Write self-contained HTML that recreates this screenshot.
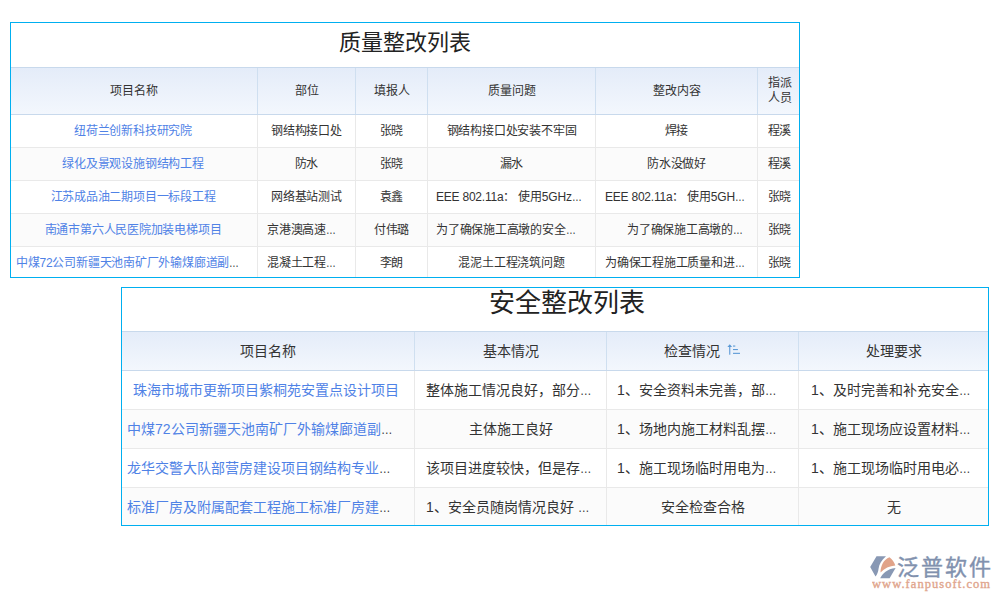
<!DOCTYPE html>
<html lang="zh-CN"><head><meta charset="utf-8"><style>
html,body{margin:0;padding:0;background:#fff;width:1000px;height:600px;overflow:hidden;position:relative}
body{font-family:"Liberation Sans",sans-serif}
.t{position:absolute;white-space:nowrap;overflow:hidden}
.e{display:inline-block;color:#333;transform:scaleX(.82);transform-origin:0 0}
.sort{display:inline-block;width:16px;height:12px;margin-left:5px}
</style></head><body>
<div style="position:absolute;left:10px;top:22px;width:790px;height:256px;box-sizing:border-box;border:1px solid #00aff0;background:#fff"></div><div style="position:absolute;left:11px;top:67px;width:788px;height:48px;background:linear-gradient(#e4ecf9,#f3f7fd);border-top:1px solid #c8d9ec;border-bottom:1px solid #c8d9ec;box-sizing:border-box"></div><div style="position:absolute;left:11px;top:148px;width:788px;height:32px;background:#fbfbfb"></div><div style="position:absolute;left:11px;top:214px;width:788px;height:32px;background:#fbfbfb"></div><div style="position:absolute;left:11px;top:147px;width:788px;height:1px;background:#e9e9e9"></div><div style="position:absolute;left:11px;top:180px;width:788px;height:1px;background:#e9e9e9"></div><div style="position:absolute;left:11px;top:213px;width:788px;height:1px;background:#e9e9e9"></div><div style="position:absolute;left:11px;top:246px;width:788px;height:1px;background:#e9e9e9"></div><div style="position:absolute;left:257px;top:68px;width:1px;height:46px;background:#cfdff0"></div><div style="position:absolute;left:257px;top:115px;width:1px;height:162px;background:#e9e9e9"></div><div style="position:absolute;left:355px;top:68px;width:1px;height:46px;background:#cfdff0"></div><div style="position:absolute;left:355px;top:115px;width:1px;height:162px;background:#e9e9e9"></div><div style="position:absolute;left:427px;top:68px;width:1px;height:46px;background:#cfdff0"></div><div style="position:absolute;left:427px;top:115px;width:1px;height:162px;background:#e9e9e9"></div><div style="position:absolute;left:595px;top:68px;width:1px;height:46px;background:#cfdff0"></div><div style="position:absolute;left:595px;top:115px;width:1px;height:162px;background:#e9e9e9"></div><div style="position:absolute;left:757px;top:68px;width:1px;height:46px;background:#cfdff0"></div><div style="position:absolute;left:757px;top:115px;width:1px;height:162px;background:#e9e9e9"></div><div class="t" style="left:11px;top:21px;width:788px;height:44px;line-height:44px;text-align:center;font-size:22px;color:#222">质量整改列表</div><div class="t" style="left:11px;top:68px;width:246px;height:46px;line-height:46px;text-align:center;font-size:12px;color:#333333">项目名称</div><div class="t" style="left:258px;top:68px;width:97px;height:46px;line-height:46px;text-align:center;font-size:12px;color:#333333">部位</div><div class="t" style="left:356px;top:68px;width:71px;height:46px;line-height:46px;text-align:center;font-size:12px;color:#333333">填报人</div><div class="t" style="left:428px;top:68px;width:167px;height:46px;line-height:46px;text-align:center;font-size:12px;color:#333333">质量问题</div><div class="t" style="left:596px;top:68px;width:161px;height:46px;line-height:46px;text-align:center;font-size:12px;color:#333333">整改内容</div><div class="t" style="left:758px;top:68px;width:41px;height:46px;line-height:46px;text-align:center;font-size:12px;color:#333333"><span style="display:inline-block;line-height:14.5px;vertical-align:middle;position:relative;left:1px;top:-1px">指派<br>人员</span></div><div class="t" style="left:10px;top:115px;width:246px;height:32px;line-height:32px;text-align:center;font-size:12px;color:#4f82e6;letter-spacing:-0.22px">纽荷兰创新科技研究院</div><div class="t" style="left:258px;top:115px;width:97px;height:32px;line-height:32px;text-align:center;font-size:12px;color:#333333;letter-spacing:-0.22px">钢结构接口处</div><div class="t" style="left:356px;top:115px;width:71px;height:32px;line-height:32px;text-align:center;font-size:12px;color:#333333;letter-spacing:-0.22px">张晓</div><div class="t" style="left:428px;top:115px;width:167px;height:32px;line-height:32px;text-align:center;font-size:12px;color:#333333;letter-spacing:-0.22px">钢结构接口处安装不牢固</div><div class="t" style="left:596px;top:115px;width:161px;height:32px;line-height:32px;text-align:center;font-size:12px;color:#333333;letter-spacing:-0.22px">焊接</div><div class="t" style="left:759px;top:115px;width:41px;height:32px;line-height:32px;text-align:center;font-size:12px;color:#333333;letter-spacing:-0.22px">程溪</div><div class="t" style="left:10px;top:148px;width:246px;height:32px;line-height:32px;text-align:center;font-size:12px;color:#4f82e6;letter-spacing:-0.22px">绿化及景观设施钢结构工程</div><div class="t" style="left:258px;top:148px;width:97px;height:32px;line-height:32px;text-align:center;font-size:12px;color:#333333;letter-spacing:-0.22px">防水</div><div class="t" style="left:356px;top:148px;width:71px;height:32px;line-height:32px;text-align:center;font-size:12px;color:#333333;letter-spacing:-0.22px">张晓</div><div class="t" style="left:428px;top:148px;width:167px;height:32px;line-height:32px;text-align:center;font-size:12px;color:#333333;letter-spacing:-0.22px">漏水</div><div class="t" style="left:596px;top:148px;width:161px;height:32px;line-height:32px;text-align:center;font-size:12px;color:#333333;letter-spacing:-0.22px">防水没做好</div><div class="t" style="left:759px;top:148px;width:41px;height:32px;line-height:32px;text-align:center;font-size:12px;color:#333333;letter-spacing:-0.22px">程溪</div><div class="t" style="left:10px;top:181px;width:246px;height:32px;line-height:32px;text-align:center;font-size:12px;color:#4f82e6;letter-spacing:-0.22px">江苏成品油二期项目一标段工程</div><div class="t" style="left:258px;top:181px;width:97px;height:32px;line-height:32px;text-align:center;font-size:12px;color:#333333;letter-spacing:-0.22px">网络基站测试</div><div class="t" style="left:356px;top:181px;width:71px;height:32px;line-height:32px;text-align:center;font-size:12px;color:#333333;letter-spacing:-0.22px">袁鑫</div><div class="t" style="left:436px;top:181px;width:159px;height:32px;line-height:32px;text-align:left;font-size:12px;color:#333333;letter-spacing:-0.22px">EEE 802.11a： 使用5GHz<span class="e">…</span></div><div class="t" style="left:605px;top:181px;width:152px;height:32px;line-height:32px;text-align:left;font-size:12px;color:#333333;letter-spacing:-0.22px">EEE 802.11a： 使用5GH<span class="e">…</span></div><div class="t" style="left:759px;top:181px;width:41px;height:32px;line-height:32px;text-align:center;font-size:12px;color:#333333;letter-spacing:-0.22px">张晓</div><div class="t" style="left:10px;top:214px;width:246px;height:32px;line-height:32px;text-align:center;font-size:12px;color:#4f82e6;letter-spacing:-0.22px">南通市第六人民医院加装电梯项目</div><div class="t" style="left:267px;top:214px;width:88px;height:32px;line-height:32px;text-align:left;font-size:12px;color:#333333;letter-spacing:-0.22px">京港澳高速<span class="e">…</span></div><div class="t" style="left:356px;top:214px;width:71px;height:32px;line-height:32px;text-align:center;font-size:12px;color:#333333;letter-spacing:-0.22px">付伟璐</div><div class="t" style="left:436px;top:214px;width:159px;height:32px;line-height:32px;text-align:left;font-size:12px;color:#333333;letter-spacing:-0.22px">为了确保施工高墩的安全<span class="e">…</span></div><div class="t" style="left:627px;top:214px;width:130px;height:32px;line-height:32px;text-align:left;font-size:12px;color:#333333;letter-spacing:-0.22px">为了确保施工高墩的<span class="e">…</span></div><div class="t" style="left:759px;top:214px;width:41px;height:32px;line-height:32px;text-align:center;font-size:12px;color:#333333;letter-spacing:-0.22px">张晓</div><div class="t" style="left:16px;top:247px;width:241px;height:32px;line-height:32px;text-align:left;font-size:12px;color:#4f82e6;letter-spacing:-0.22px">中煤72公司新疆天池南矿厂外输煤廊道副<span class="e">…</span></div><div class="t" style="left:267px;top:247px;width:88px;height:32px;line-height:32px;text-align:left;font-size:12px;color:#333333;letter-spacing:-0.22px">混凝土工程<span class="e">…</span></div><div class="t" style="left:356px;top:247px;width:71px;height:32px;line-height:32px;text-align:center;font-size:12px;color:#333333;letter-spacing:-0.22px">李朗</div><div class="t" style="left:428px;top:247px;width:167px;height:32px;line-height:32px;text-align:center;font-size:12px;color:#333333;letter-spacing:-0.22px">混泥土工程浇筑问题</div><div class="t" style="left:605px;top:247px;width:152px;height:32px;line-height:32px;text-align:left;font-size:12px;color:#333333;letter-spacing:-0.22px">为确保工程施工质量和进<span class="e">…</span></div><div class="t" style="left:759px;top:247px;width:41px;height:32px;line-height:32px;text-align:center;font-size:12px;color:#333333;letter-spacing:-0.22px">张晓</div><div style="position:absolute;left:121px;top:287px;width:868px;height:239px;box-sizing:border-box;border:1px solid #00aff0;background:#fff"></div><div style="position:absolute;left:122px;top:331px;width:866px;height:40px;background:linear-gradient(#e4ecf9,#f3f7fd);border-top:1px solid #c8d9ec;border-bottom:1px solid #c8d9ec;box-sizing:border-box"></div><div style="position:absolute;left:122px;top:410px;width:866px;height:38px;background:#fbfbfb"></div><div style="position:absolute;left:122px;top:488px;width:866px;height:37px;background:#fbfbfb"></div><div style="position:absolute;left:122px;top:409px;width:866px;height:1px;background:#e9e9e9"></div><div style="position:absolute;left:122px;top:448px;width:866px;height:1px;background:#e9e9e9"></div><div style="position:absolute;left:122px;top:487px;width:866px;height:1px;background:#e9e9e9"></div><div style="position:absolute;left:414px;top:332px;width:1px;height:38px;background:#cfdff0"></div><div style="position:absolute;left:414px;top:371px;width:1px;height:154px;background:#e9e9e9"></div><div style="position:absolute;left:606px;top:332px;width:1px;height:38px;background:#cfdff0"></div><div style="position:absolute;left:606px;top:371px;width:1px;height:154px;background:#e9e9e9"></div><div style="position:absolute;left:798px;top:332px;width:1px;height:38px;background:#cfdff0"></div><div style="position:absolute;left:798px;top:371px;width:1px;height:154px;background:#e9e9e9"></div><div class="t" style="left:134px;top:282px;width:866px;height:43px;line-height:43px;text-align:center;font-size:26px;color:#222">安全整改列表</div><div class="t" style="left:122px;top:332px;width:292px;height:38px;line-height:38px;text-align:center;font-size:14px;color:#333333">项目名称</div><div class="t" style="left:415px;top:332px;width:191px;height:38px;line-height:38px;text-align:center;font-size:14px;color:#333333">基本情况</div><div class="t" style="left:607px;top:332px;width:191px;height:38px;line-height:38px;text-align:center;font-size:14px;color:#333333">检查情况<span class="sort"></span></div><div class="t" style="left:799px;top:332px;width:189px;height:38px;line-height:38px;text-align:center;font-size:14px;color:#333333">处理要求</div><div class="t" style="left:133px;top:371px;width:281px;height:38px;line-height:38px;text-align:left;font-size:14px;color:#4f82e6;letter-spacing:0px">珠海市城市更新项目紫桐苑安置点设计项目</div><div class="t" style="left:426px;top:371px;width:180px;height:38px;line-height:38px;text-align:left;font-size:14px;color:#333333;letter-spacing:0px">整体施工情况良好，部分<span class="e">…</span></div><div class="t" style="left:617px;top:371px;width:181px;height:38px;line-height:38px;text-align:left;font-size:14px;color:#333333;letter-spacing:0px">1、安全资料未完善，部<span class="e">…</span></div><div class="t" style="left:811px;top:371px;width:177px;height:38px;line-height:38px;text-align:left;font-size:14px;color:#333333;letter-spacing:0px">1、及时完善和补充安全<span class="e">…</span></div><div class="t" style="left:127px;top:410px;width:287px;height:38px;line-height:38px;text-align:left;font-size:14px;color:#4f82e6;letter-spacing:0px">中煤72公司新疆天池南矿厂外输煤廊道副<span class="e">…</span></div><div class="t" style="left:415px;top:410px;width:191px;height:38px;line-height:38px;text-align:center;font-size:14px;color:#333333;letter-spacing:0px">主体施工良好</div><div class="t" style="left:617px;top:410px;width:181px;height:38px;line-height:38px;text-align:left;font-size:14px;color:#333333;letter-spacing:0px">1、场地内施工材料乱摆<span class="e">…</span></div><div class="t" style="left:811px;top:410px;width:177px;height:38px;line-height:38px;text-align:left;font-size:14px;color:#333333;letter-spacing:0px">1、施工现场应设置材料<span class="e">…</span></div><div class="t" style="left:127px;top:449px;width:287px;height:38px;line-height:38px;text-align:left;font-size:14px;color:#4f82e6;letter-spacing:0px">龙华交警大队部营房建设项目钢结构专业<span class="e">…</span></div><div class="t" style="left:426px;top:449px;width:180px;height:38px;line-height:38px;text-align:left;font-size:14px;color:#333333;letter-spacing:0px">该项目进度较快，但是存<span class="e">…</span></div><div class="t" style="left:617px;top:449px;width:181px;height:38px;line-height:38px;text-align:left;font-size:14px;color:#333333;letter-spacing:0px">1、施工现场临时用电为<span class="e">…</span></div><div class="t" style="left:811px;top:449px;width:177px;height:38px;line-height:38px;text-align:left;font-size:14px;color:#333333;letter-spacing:0px">1、施工现场临时用电必<span class="e">…</span></div><div class="t" style="left:127px;top:488px;width:287px;height:38px;line-height:38px;text-align:left;font-size:14px;color:#4f82e6;letter-spacing:0px">标准厂房及附属配套工程施工标准厂房建<span class="e">…</span></div><div class="t" style="left:426px;top:488px;width:180px;height:38px;line-height:38px;text-align:left;font-size:14px;color:#333333;letter-spacing:0px">1、安全员随岗情况良好 <span class="e">…</span></div><div class="t" style="left:607px;top:488px;width:191px;height:38px;line-height:38px;text-align:center;font-size:14px;color:#333333;letter-spacing:0px">安全检查合格</div><div class="t" style="left:799px;top:488px;width:189px;height:38px;line-height:38px;text-align:center;font-size:14px;color:#333333;letter-spacing:0px">无</div>
<svg style="position:absolute;left:724px;top:342px" width="16" height="14" viewBox="0 0 16 14">
<rect x="5.2" y="3.2" width="1.1" height="9.5" fill="#5c9ad6"/>
<path d="M3.4 5 L5.75 2.3 L8.1 5 Z" fill="#5c9ad6"/>
<rect x="9" y="3.5" width="2.3" height="1.1" fill="#5c9ad6"/>
<rect x="9" y="7" width="4.9" height="1.1" fill="#5c9ad6"/>
<rect x="9" y="10.8" width="7.2" height="1.1" fill="#5c9ad6"/>
</svg>
<svg style="position:absolute;left:866px;top:552px" width="34" height="30" viewBox="0 0 34 30">
 <path d="M4.2 15 L10.5 4.2 L20 4.2 C15.5 8 13.2 12 12.6 16.5 C12.2 20 11.2 22.5 9.5 24.6 Z" fill="#8898b4"/>
 <path d="M14.5 20.6 C14.6 14 17.5 7.5 23.5 5.3 C26.2 7.2 28.5 10.5 29.3 13.6 C23.5 14 18.5 16.5 14.5 20.6 Z" fill="#e1a389"/>
 <path d="M14.2 26.3 C16.5 21.5 21 17 29.6 16 L23.6 26.3 Z" fill="#8898b4"/>
</svg>
<div class="t" style="left:897px;top:552px;height:32px;line-height:32px;font-size:22px;color:#8191ae;letter-spacing:2px;-webkit-text-stroke:0.4px #8191ae">泛普软件</div>
<div class="t" style="left:872px;top:576px;height:16px;line-height:16px;font-family:'Liberation Serif',serif;font-size:12.5px;color:#e0a48c;letter-spacing:1.05px;-webkit-text-stroke:0.35px #e0a48c">www.fanpusoft.com</div>

</body></html>
